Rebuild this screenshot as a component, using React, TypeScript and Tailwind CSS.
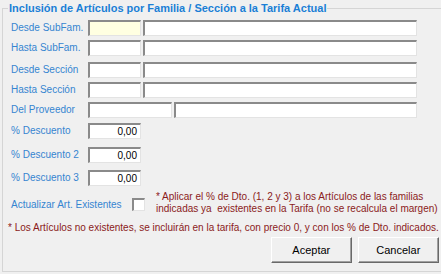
import React from "react";

const font = { fontFamily: '"Liberation Sans", Arial, sans-serif' };

const Field = ({ w, value, yellow }: { w: string; value?: string; yellow?: boolean }) => (
  <div
    className={`${w} h-[16px] border-t-2 border-l-2 border-t-[#8a8a8a] border-l-[#8a8a8a] border-b border-r border-b-[#e3e3e3] border-r-[#e3e3e3] ${
      yellow ? "bg-[#ffffe1]" : "bg-white"
    } text-[10px] text-black text-right pr-[3px] leading-[13px]`}
  >
    {value}
  </div>
);

const Label = ({ children }: { children: React.ReactNode }) => (
  <div className="w-[77px] text-[10px] text-[#3585d0] leading-[16px] whitespace-nowrap">{children}</div>
);

const Row = ({ label, mt, children }: { label: string; mt: string; children: React.ReactNode }) => (
  <div className={`flex items-center ${mt}`}>
    <Label>{label}</Label>
    <div className="flex gap-[2px]">{children}</div>
  </div>
);

const Button = ({ children }: { children: React.ReactNode }) => (
  <button className="w-[81px] h-[26px] bg-[#f0f0f0] border border-t-white border-l-white border-b-[#696969] border-r-[#696969] shadow-[inset_-1px_-1px_0_#a0a0a0] text-[11px] text-black">
    {children}
  </button>
);

export default function App() {
  return (
    <div className="w-[441px] h-[274px] bg-[#f0f0f0] pt-[1px] overflow-hidden" style={font}>
      <fieldset className="ml-[2px] w-[433px] h-[271px] border border-[#d5d5d5] pl-[8px] pr-[15px]">
        <legend className="-ml-[3px] px-[1px] text-[11px] font-bold text-[#1a7fd6] leading-[15px]">
          Inclusión de Artículos por Familia / Sección a la Tarifa Actual
        </legend>
        <Row label="Desde SubFam." mt="mt-[4px]">
          <Field w="w-[53px]" yellow />
          <Field w="w-[274px]" />
        </Row>
        <Row label="Hasta SubFam." mt="mt-[4px]">
          <Field w="w-[53px]" />
          <Field w="w-[274px]" />
        </Row>
        <Row label="Desde Sección" mt="mt-[6px]">
          <Field w="w-[53px]" />
          <Field w="w-[274px]" />
        </Row>
        <Row label="Hasta Sección" mt="mt-[4px]">
          <Field w="w-[53px]" />
          <Field w="w-[274px]" />
        </Row>
        <Row label="Del Proveedor" mt="mt-[4px]">
          <Field w="w-[84px]" />
          <Field w="w-[243px]" />
        </Row>
        <Row label="% Descuento" mt="mt-[5px]">
          <Field w="w-[53px]" value="0,00" />
        </Row>
        <Row label="% Descuento 2" mt="mt-[8px]">
          <Field w="w-[53px]" value="0,00" />
        </Row>
        <Row label="% Descuento 3" mt="mt-[7px]">
          <Field w="w-[53px]" value="0,00" />
        </Row>
        <div className="flex mt-[5px]">
          <div className="w-[121px] text-[10px] text-[#3585d0] leading-[16px] pt-[6px] whitespace-nowrap">
            Actualizar Art. Existentes
          </div>
          <div className="w-[13px] h-[13px] mt-[7px] bg-white border-t-2 border-l-2 border-t-[#8a8a8a] border-l-[#8a8a8a] border-b border-r border-b-[#e3e3e3] border-r-[#e3e3e3]" />
          <div className="ml-[11px] text-[10px] text-[#8b1b1b] leading-[12px] whitespace-nowrap">
            <div>* Aplicar el % de Dto. (1, 2 y 3) a los Artículos de las familias</div>
            <div>indicadas ya &nbsp;existentes en la Tarifa (no se recalcula el margen)</div>
          </div>
        </div>
        <div className="mt-[7px] -ml-[3px] text-[10px] text-[#8b1b1b] leading-[12px] whitespace-nowrap">
          * Los Artículos no existentes, se incluirán en la tarifa, con precio 0, y con los % de Dto. indicados.
        </div>
        <div className="flex justify-end gap-[6px] mt-[3px]">
          <Button>Aceptar</Button>
          <Button>Cancelar</Button>
        </div>
      </fieldset>
    </div>
  );
}
